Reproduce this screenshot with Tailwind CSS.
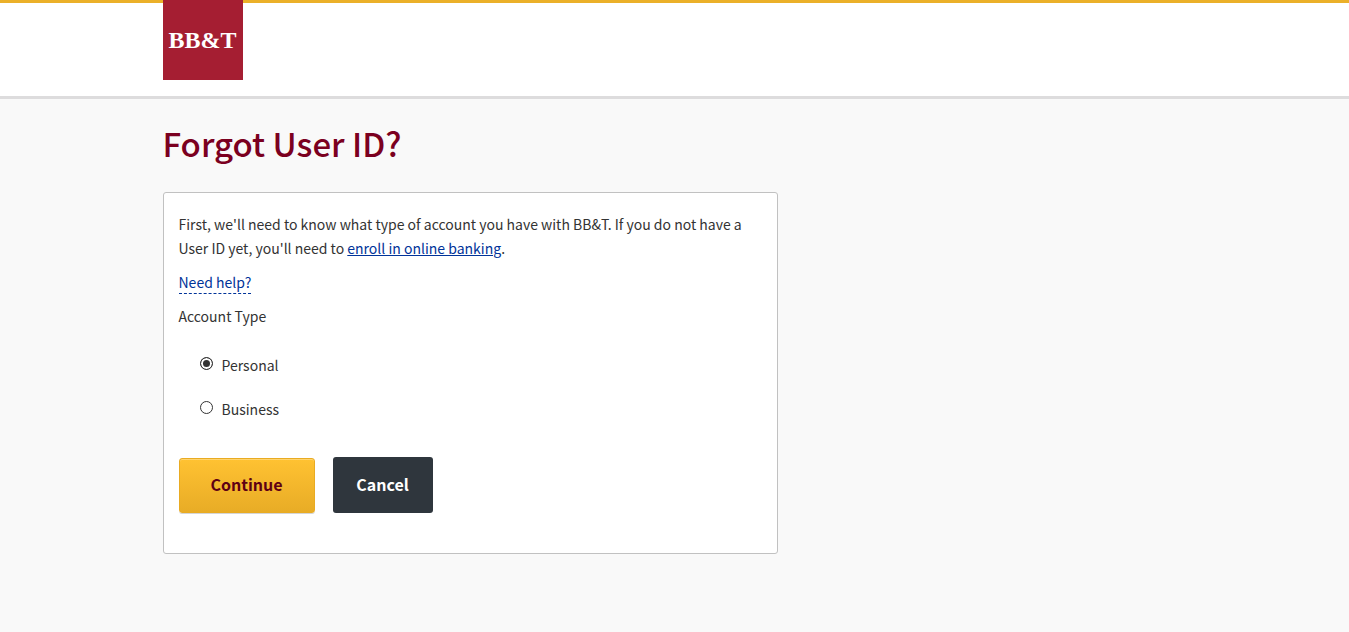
<!DOCTYPE html>
<html lang="en">
<head>
<meta charset="utf-8">
<meta name="viewport" content="width=device-width, initial-scale=1">
<title>Forgot User ID?</title>
<script src="https://cdn.jsdelivr.net/npm/@tailwindcss/browser@4"></script>
</head>
<body class="min-h-screen bg-[#f9f9f9] font-['Noto_Sans_CJK_SC','Noto_Sans',sans-serif] text-sm leading-6 text-[#333]">
<header class="border-b-3 border-[#dddcdd] bg-white">
  <div class="h-[3px] bg-[#ebb029]"></div>
  <div class="mx-auto -mt-[3px] max-w-[1024px] pb-4">
    <a href="#" class="flex size-20 items-center justify-center bg-[#a51e32] font-['Liberation_Serif',serif] text-2xl font-bold text-white">BB&amp;T</a>
  </div>
</header>
<main class="mx-auto max-w-[1024px] pt-5">
  <h1 class="text-[33px] leading-[48px] font-medium text-[#7b0020]">Forgot User ID?</h1>
  <form class="mt-[25px] max-w-[615px] rounded-[3px] border border-[#c1c1c1] bg-white px-[15px] pt-[19px] pb-10">
    <p>First, we'll need to know what type of account you have with BB&amp;T. If you do not have a User ID yet, you'll need to <a href="#" class="text-[#003399] underline">enroll in online banking</a>.</p>
    <p class="mt-2.5"><a href="#" class="border-b border-dashed border-[#003399] pb-px text-[#003399]">Need help?</a></p>
    <fieldset>
      <legend class="pt-2.5">Account Type</legend>
      <div class="mt-[25px] flex flex-col gap-5 pl-[21px]">
        <label class="flex gap-[9px]"><input type="radio" name="account" checked class="mt-1 size-[13px] appearance-none rounded-full border border-[#333] bg-white checked:bg-[#333] checked:shadow-[inset_0_0_0_2px_white]">Personal</label>
        <label class="flex gap-[9px]"><input type="radio" name="account" class="mt-1 size-[13px] appearance-none rounded-full border border-[#333] bg-white checked:bg-[#333] checked:shadow-[inset_0_0_0_2px_white]">Business</label>
      </div>
    </fieldset>
    <div class="mt-9 flex items-start gap-[18px] text-base font-bold">
      <button type="submit" class="mt-px h-[55px] w-[136px] rounded-[3px] border border-[#e9ab22] bg-linear-to-b from-[#ffc232] to-[#e8ac26] pb-1 text-[#5e0014] shadow-[inset_0_1px_0_#ffd46e,0_1px_0_#d5d5d5]">Continue</button>
      <button type="button" class="h-14 w-[100px] rounded-[3px] bg-[#2f363d] pb-0.5 text-white">Cancel</button>
    </div>
  </form>
</main>
</body>
</html>
